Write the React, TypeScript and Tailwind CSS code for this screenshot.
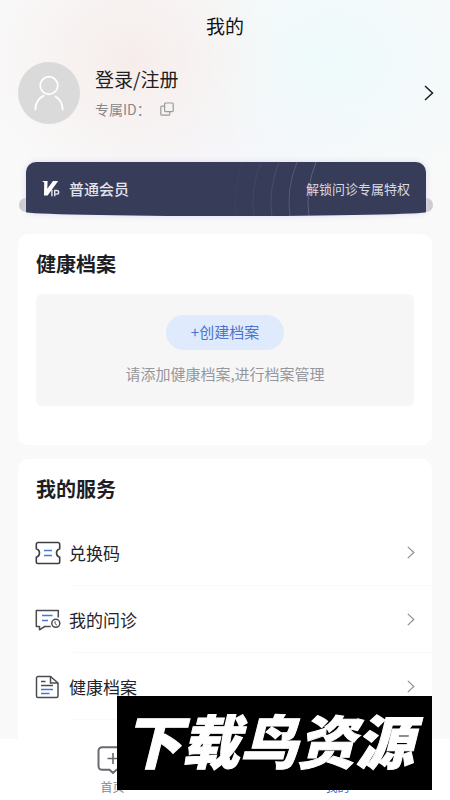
import type { ReactNode } from "react";

const arcs = [
  { x: 10, opacity: 0.04 },
  { x: 28, opacity: 0.08 },
  { x: 46, opacity: 0.13 },
  { x: 64, opacity: 0.2 },
  { x: 83, opacity: 0.25 },
];

function Chevron({ className }: { className: string }) {
  return (
    <svg viewBox="0 0 10 16" fill="none" className={className} aria-hidden="true">
      <path d="M1 1l7.500 7L1 15" stroke="currentColor" strokeWidth="1.500" />
    </svg>
  );
}

function Avatar() {
  return (
    <div className="flex size-[62px] shrink-0 items-center justify-center rounded-full bg-[#dadada]">
      <svg viewBox="0 0 32 36" fill="none" stroke="#fff" strokeWidth="1.800" className="h-9 w-8" aria-hidden="true">
        <circle cx="16" cy="10.500" r="8.800" />
        <path d="M2.300 34.500C2.500 28 6 22.500 10.800 20.600M22.500 21.500C27 24 29.500 28.500 29.700 34.500" strokeLinecap="round" />
      </svg>
    </div>
  );
}

function CopyIcon() {
  return (
    <svg viewBox="0 0 14 14" fill="none" stroke="#9a9a9c" strokeWidth="1.200" className="size-3.5" aria-hidden="true">
      <rect x="4.600" y="1" width="8.600" height="8.600" rx="1" />
      <path d="M4.400 4.200H1.800a1 1 0 0 0-1 1v7a1 1 0 0 0 1 1h7a1 1 0 0 0 1-1V9.800" />
    </svg>
  );
}

function VipLogo() {
  return (
    <svg viewBox="0 0 18 18" className="size-[18px]" aria-hidden="true">
      <path d="M0 1h5.600l-.3 7.800L11 1h5.200L5.600 15.500H2L2.200 2.600z" fill="#fff" />
      <path d="M9.900 9.800v6.400M12.700 16.200v-5.700h2.200a1.800 1.800 0 0 1 0 3.600h-2.200" fill="none" stroke="#e6e6ee" strokeWidth="1.400" />
    </svg>
  );
}

function TicketIcon() {
  return (
    <svg viewBox="0 0 26 24" fill="none" strokeWidth="1.600" className="h-6 w-[26px]" aria-hidden="true">
      <path
        d="M3 1.500h20a1.700 1.700 0 0 1 1.700 1.700v4.500c-2 .6-3.200 2.200-3.200 4.300s1.200 3.700 3.200 4.300v4.500A1.700 1.700 0 0 1 23 22.500H3a1.700 1.700 0 0 1-1.700-1.700v-4.500c2-.6 3.200-2.200 3.200-4.300S3.300 8.300 1.300 7.700V3.200A1.700 1.700 0 0 1 3 1.500z"
        stroke="#3e3f46"
      />
      <path d="M9 9.500h8M9 14.500h8" stroke="#4a78d0" />
    </svg>
  );
}

function ConsultIcon() {
  return (
    <svg viewBox="0 0 26 24" fill="none" strokeWidth="1.500" className="h-6 w-[26px]" aria-hidden="true">
      <path d="M23.300 9.500V2.500H1.300v16h3.200v3.300l5.200-3.300h6" stroke="#4b4c53" strokeLinejoin="round" />
      <circle cx="20.800" cy="15.300" r="4" stroke="#4b4c53" />
      <path d="M20 13.200v2.400l1.900 1.500" stroke="#4b4c53" strokeWidth="1" />
      <path d="M7 7.500h10.500M7 12.500h6" stroke="#4a78d0" />
    </svg>
  );
}

function RecordIcon() {
  return (
    <svg viewBox="0 0 26 24" fill="none" strokeWidth="1.500" className="h-6 w-[26px]" aria-hidden="true">
      <path d="M15.500 1.500H3a1.500 1.500 0 0 0-1.500 1.500v18A1.500 1.500 0 0 0 3 22.500h18.500A1.500 1.500 0 0 0 23 21V8z" stroke="#4b4c53" />
      <path d="M15.500 1.500V8H23M6 6.500h4.500M6 10.500h12" stroke="#4b4c53" />
      <path d="M6 14.500h12M6 18.500h8.500" stroke="#4a78d0" />
    </svg>
  );
}

function HomeIcon() {
  return (
    <svg viewBox="0 0 32 28" fill="none" stroke="#686a72" className="h-7 w-8" aria-hidden="true">
      <path
        d="M5 1.300h22a3.500 3.500 0 0 1 3.500 3.500v15.400a3.500 3.500 0 0 1-3.500 3.500h-7.500L16 27l-3.500-3.300H5a3.500 3.500 0 0 1-3.500-3.500V4.800A3.500 3.500 0 0 1 5 1.300z"
        strokeWidth="2"
      />
      <path d="M16 7v11M10.500 12.500h11" strokeWidth="1.600" />
    </svg>
  );
}

function MineIcon() {
  return (
    <svg viewBox="0 0 32 28" fill="none" stroke="#2f6bd0" strokeWidth="2" className="h-7 w-8" aria-hidden="true">
      <circle cx="16" cy="8" r="6" />
      <path d="M4 26c1-7 6-10 12-10s11 3 12 10z" />
    </svg>
  );
}

function ServiceRow({ icon, label }: { icon: ReactNode; label: string }) {
  return (
    <li>
      <a href="#" className="flex h-[67px] items-center px-[17px]">
        {icon}
        <span className="ml-2 flex h-full flex-1 items-center text-[17px] text-[#24252b]">{label}</span>
        <Chevron className="h-[13px] w-2 text-[#8f8f92]" />
      </a>
      <div className="-mt-px ml-14 h-px bg-[#f9f9fa]" />
    </li>
  );
}

export default function App() {
  return (
    <div className="relative flex h-screen flex-col overflow-hidden bg-[#f9f9f9] font-['Noto_Sans_CJK_SC',sans-serif] text-[#1d1e24]">
      <main className="min-h-0 flex-1 overflow-hidden bg-[radial-gradient(ellipse_150px_130px_at_29%_60px,#f6edeb,#f6edeb00),radial-gradient(ellipse_180px_150px_at_74%_60px,#eefafb,#eefafb00),radial-gradient(ellipse_170px_60px_at_50%_140px,#f7f5fa,#f7f5fa00)]">
        <header className="flex h-[53px] items-center justify-center">
          <h1 className="text-[19px] text-[#111217]">我的</h1>
        </header>

        <section className="flex h-20 items-center px-[18px]">
          <Avatar />
          <div className="ml-[15px] flex flex-1 flex-col gap-1.5 pt-0.5">
            <a href="#" className="text-[19px] leading-6">登录/注册</a>
            <div className="flex items-center text-sm leading-6 text-[#87878b]">
              <span>专属ID：</span>
              <button type="button" aria-label="复制ID" className="ml-[9px]">
                <CopyIcon />
              </button>
            </div>
          </div>
          <Chevron className="-mr-0.5 h-4 w-2.5 text-[#1d1e24]" />
        </section>

        <section className="relative mt-[29px] pr-6 pl-[26px]">
          <div className="absolute top-9 right-[17px] left-[19px] h-3.5 rounded-full bg-[#cbc9cf]" />
          <a
            href="#"
            className="relative flex h-[54px] items-center overflow-hidden rounded-[10px_10px_50%_50%/10px_10px_4px_4px] bg-[#373c59] px-4 shadow-[0_0_6px_#dcd9f5]"
          >
            <svg viewBox="0 0 100 54" fill="none" className="absolute top-0 right-[101px] h-[54px] w-[100px]" aria-hidden="true">
              {arcs.map((arc) => (
                <path key={arc.x} d={`M${arc.x + 8} 0Q${arc.x - 3} 28 ${arc.x + 1} 54`} stroke="#c9cce8" strokeOpacity={arc.opacity} />
              ))}
            </svg>
            <VipLogo />
            <span className="ml-[9px] text-[15px] font-medium text-[#e4e4ec]">普通会员</span>
            <span className="relative ml-auto text-[13px] text-[#d9d9e2]">解锁问诊专属特权</span>
          </a>
        </section>

        <section className="mx-[18px] mt-[18px] h-[211px] rounded-[10px] bg-white px-[18px] pt-4">
          <h2 className="text-[20px] leading-7 font-bold">健康档案</h2>
          <div className="mt-4 flex h-28 flex-col items-center rounded-md bg-[#f6f6f6] pt-[21px]">
            <button type="button" className="h-[35px] rounded-full bg-[#dfeafc] px-[25px] text-[15px] text-[#4a74cf]">
              +创建档案
            </button>
            <p className="mt-3 text-[15px] leading-6 text-[#97979b]">请添加健康档案,进行档案管理</p>
          </div>
        </section>

        <section className="mx-[18px] mt-3.5 rounded-[10px] bg-white pt-4">
          <h2 className="px-[18px] text-[20px] leading-7 font-bold">我的服务</h2>
          <ul className="mt-4 pb-10">
            <ServiceRow icon={<TicketIcon />} label="兑换码" />
            <ServiceRow icon={<ConsultIcon />} label="我的问诊" />
            <ServiceRow icon={<RecordIcon />} label="健康档案" />
          </ul>
        </section>
      </main>

      <nav className="flex h-[61px] shrink-0 bg-white pt-[7px]">
        <a href="#" className="flex flex-1 flex-col items-center text-xs text-[#86878c]">
          <HomeIcon />
          <span className="mt-[5px]">首页</span>
        </a>
        <a href="#" className="flex flex-1 flex-col items-center text-xs text-[#2f6bd0]">
          <MineIcon />
          <span className="mt-[5px]">我的</span>
        </a>
      </nav>

      <div className="absolute right-[18px] bottom-2.5 left-[117px] flex h-[94px] items-center justify-center bg-black pr-3 pb-2">
        <span className="text-[58px] leading-none font-black whitespace-nowrap text-white italic [-webkit-text-stroke:1px_white]">
          下载鸟资源
        </span>
      </div>
    </div>
  );
}
